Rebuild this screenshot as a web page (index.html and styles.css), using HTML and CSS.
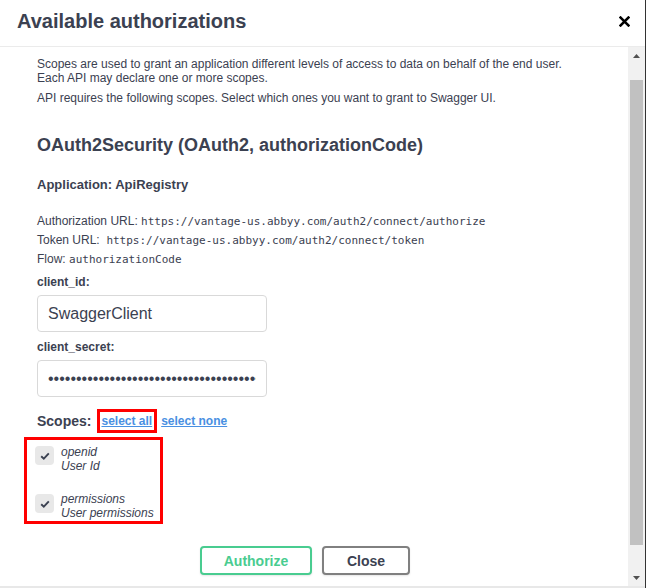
FILE: index.html
```html
<!DOCTYPE html>
<html lang="en">
<head>
<meta charset="utf-8">
<title>Available authorizations</title>
<link rel="stylesheet" href="styles.css">
</head>
<body>
<div class="modal">
  <div class="modal-header">
    <h3 class="modal-title">Available authorizations</h3>
    <button class="close-btn" type="button" aria-label="Close">
      <svg width="11" height="11" viewBox="0 0 11 11"><path d="M1.6 1.6 L9.4 9.4 M9.4 1.6 L1.6 9.4" stroke="#000" stroke-width="2.6" stroke-linecap="square"/></svg>
    </button>
  </div>
  <div class="modal-body">
    <div class="content">
      <p class="desc">Scopes are used to grant an application different levels of access to data on behalf of the end user.<br>Each API may declare one or more scopes.</p>
      <p class="desc desc-2">API requires the following scopes. Select which ones you want to grant to Swagger UI.</p>
      <h4 class="scheme-title">OAuth2Security (OAuth2, authorizationCode)</h4>
      <h6 class="app-name">Application: ApiRegistry</h6>
      <div class="urls">
        <p class="url-line">Authorization URL: <code>https://vantage-us.abbyy.com/auth2/connect/authorize</code></p>
        <p class="url-line">Token URL:&nbsp; <code>https://vantage-us.abbyy.com/auth2/connect/token</code></p>
        <p class="url-line">Flow: <code>authorizationCode</code></p>
      </div>
      <label class="field-label" for="cid">client_id:</label>
      <input id="cid" class="field-input" type="text" value="SwaggerClient">
      <label class="field-label field-label-2" for="csec">client_secret:</label>
      <input id="csec" class="field-input" type="password" value="xxxxxxxxxxxxxxxxxxxxxxxxxxxxxxxxxxxxxxxxxx">
      <div class="scopes-row">
        <span class="scopes-label">Scopes:</span>
        <a class="scope-link highlight" href="#">select all</a>
        <a class="scope-link sel-none" href="#">select none</a>
      </div>
      <div class="scope-list">
        <div class="scope-item">
          <span class="checkbox"><svg width="10" height="8" viewBox="0 0 10 8"><path d="M1.2 4.2 L3.8 6.6 L8.8 1.4" fill="none" stroke="#3b4151" stroke-width="1.9"/></svg></span>
          <span class="scope-text">openid<br>User Id</span>
        </div>
        <div class="scope-item scope-item-2">
          <span class="checkbox"><svg width="10" height="8" viewBox="0 0 10 8"><path d="M1.2 4.2 L3.8 6.6 L8.8 1.4" fill="none" stroke="#3b4151" stroke-width="1.9"/></svg></span>
          <span class="scope-text">permissions<br>User permissions</span>
        </div>
      </div>
      <div class="btn-row">
        <button class="btn btn-authorize" type="button">Authorize</button>
        <button class="btn btn-close" type="button">Close</button>
      </div>
    </div>
    <div class="scrollbar">
      <div class="sb-btn"><svg width="7" height="4" viewBox="0 0 7 4"><path d="M3.5 0 L7 4 L0 4 Z" fill="#505050"/></svg></div>
      <div class="sb-gap"></div>
      <div class="sb-thumb"></div>
      <div class="sb-rest"></div>
      <div class="sb-btn"><svg width="7" height="4" viewBox="0 0 7 4"><path d="M0 0 L7 0 L3.5 4 Z" fill="#505050"/></svg></div>
    </div>
  </div>
</div>
</body>
</html>
```
FILE: styles.css
```css
html, body {
  margin: 0;
  padding: 0;
  background: #fff;
}
body {
  font-family: "Liberation Sans", Arial, sans-serif;
  color: #3b4151;
}
.modal {
  width: 646px;
  height: 588px;
  box-sizing: border-box;
  border-right: 1px solid #333;
  overflow: hidden;
}
.modal-header {
  box-sizing: border-box;
  border-bottom: 1px solid #ebebeb;
  display: flex;
  align-items: center;
  justify-content: space-between;
  padding: 0 15px 4px 17px;
  height: 47px;
}
.modal-title {
  margin: 0;
  font-size: 20px;
  line-height: 24px;
  font-weight: 700;
  color: #3b4151;
}
.close-btn {
  border: 0;
  background: none;
  padding: 0;
  width: 11px;
  height: 11px;
  display: flex;
}
.modal-body {
  display: flex;
  height: 539px;
  border-bottom: 2px solid #e8e8e8;
}
.content {
  flex: 1;
  padding: 10px 0 0 37px;
  overflow: hidden;
}
.desc {
  margin: 0;
  font-size: 12px;
  line-height: 14px;
}
.desc-2 {
  margin-top: 6px;
}
.scheme-title {
  margin: 29px 0 0;
  font-size: 18px;
  line-height: 22px;
  font-weight: 700;
}
.app-name {
  margin: 21px 0 0;
  font-size: 13px;
  line-height: 16px;
  font-weight: 700;
}
.urls {
  margin-top: 19px;
}
.url-line {
  margin: 0;
  font-size: 12px;
  line-height: 19px;
}
.url-line code {
  font-family: "DejaVu Sans Mono", "Liberation Mono", monospace;
  font-size: 11px;
  color: #3b4151;
}
.field-label {
  display: block;
  margin-top: 5px;
  font-size: 12px;
  line-height: 16px;
  font-weight: 700;
}
.field-label-2 {
  margin-top: 7px;
}
.field-input {
  display: block;
  margin: 5px 0 0;
  width: 230px;
  height: 37px;
  box-sizing: border-box;
  border: 1px solid #d9d9d9;
  border-radius: 4px;
  padding: 0 10px;
  font-family: "Liberation Sans", Arial, sans-serif;
  font-size: 16px;
  color: #3b4151;
  background: #fff;
  outline: none;
}
.scopes-row {
  margin-top: 12px;
  height: 24px;
  display: flex;
  align-items: center;
}
.scopes-label {
  font-size: 14px;
  font-weight: 700;
  margin-right: 6px;
}
.scope-link {
  font-size: 12px;
  font-weight: 700;
  color: #4990e2;
  text-decoration: underline;
}
.highlight {
  border: 3px solid #f00;
  height: 24px;
  box-sizing: border-box;
  padding: 0 2px 0 1px;
  display: flex;
  align-items: center;
}
.sel-none {
  margin-left: 4px;
}
.scope-list {
  margin: 4px 0 0 -13px;
  display: inline-flex;
  flex-direction: column;
  gap: 19px;
  border: 3px solid #f00;
  padding: 5px 6px 1px 8px;
}
.scope-item {
  display: flex;
  align-items: flex-start;
  gap: 7px;
}
.checkbox {
  width: 19px;
  height: 19px;
  margin-top: 1px;
  border-radius: 4px;
  background: #e8e8e8;
  display: flex;
  align-items: center;
  justify-content: center;
}
.scope-item-2 .checkbox {
  margin-top: 2px;
}
.scope-text {
  font-size: 12px;
  line-height: 14px;
  font-style: italic;
  color: #3b4151;
}
.btn-row {
  margin: 22px 0 0 163px;
  display: flex;
  gap: 10px;
}
.btn {
  height: 29px;
  box-sizing: border-box;
  border-radius: 4px;
  background: #fff;
  font-family: "Liberation Sans", Arial, sans-serif;
  font-size: 14px;
  font-weight: 700;
  padding: 0;
  box-shadow: 0 1px 2px rgba(0, 0, 0, 0.1);
}
.btn-authorize {
  width: 112px;
  border: 2px solid #49cc90;
  color: #49cc90;
}
.btn-close {
  width: 88px;
  border: 2px solid #808080;
  color: #3b4151;
}
.scrollbar {
  width: 17px;
  background: #f1f1f1;
  display: flex;
  flex-direction: column;
}
.sb-btn {
  height: 17px;
  flex: none;
  display: flex;
  align-items: center;
  justify-content: center;
}
.sb-gap {
  height: 16px;
  flex: none;
}
.sb-thumb {
  height: 465px;
  flex: none;
  margin: 0 2px;
  background: #c1c1c1;
}
.sb-rest {
  flex: 1;
}
```
